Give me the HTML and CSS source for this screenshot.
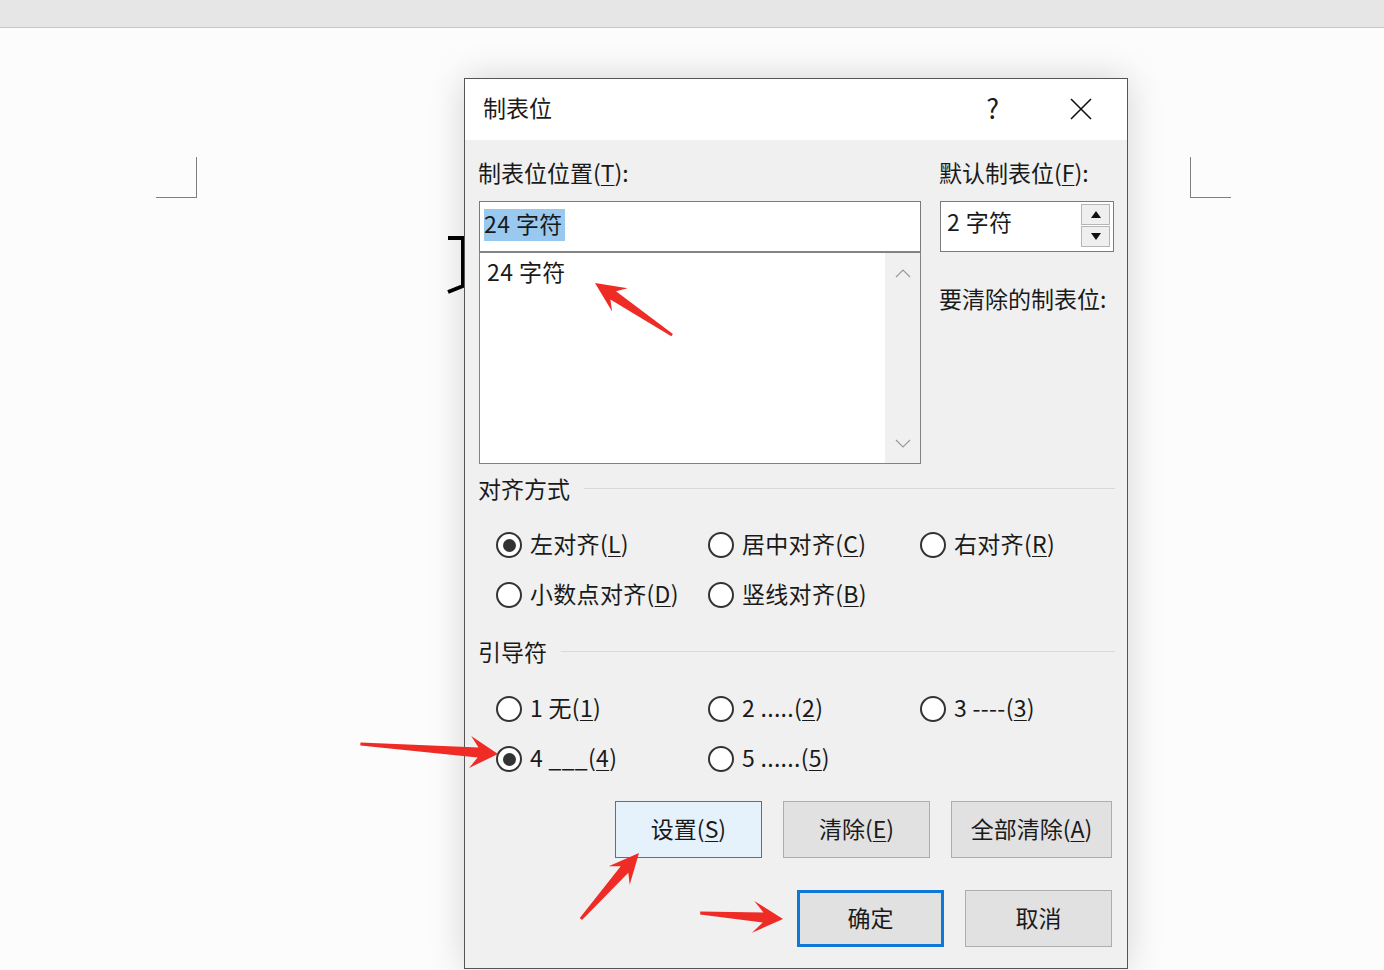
FILE: index.html
```html
<!DOCTYPE html>
<html lang="zh-CN">
<head>
<meta charset="utf-8">
<title>制表位</title>
<link rel="stylesheet" href="styles.css">
</head>
<body>
<div class="app">
  <div class="topbar"></div>
  <div class="page">
    <span class="crop crop-left"></span>
    <span class="crop crop-right"></span>
    <svg class="cursor" width="22" height="62" viewBox="0 0 22 62">
      <path d="M2 3 H17 V51 L2 57" fill="none" stroke="#000" stroke-width="4"/>
    </svg>

    <div class="dialog">
      <div class="titlebar">
        <span class="title">制表位</span>
        <span class="help">?</span>
        <svg class="close" width="22" height="22" viewBox="0 0 22 22">
          <path d="M1 1 L21 21 M21 1 L1 21" stroke="#111" stroke-width="1.6" fill="none"/>
        </svg>
      </div>

      <div class="body">
        <div class="top">
          <div class="col col-left">
            <div class="label">制表位位置(<u>T</u>):</div>
            <div class="input"><span class="sel">24 字符</span></div>
            <div class="list">
              <div class="list-items">
                <div class="list-item">24 字符</div>
              </div>
              <div class="scroll">
                <svg width="16" height="10" viewBox="0 0 16 10"><path d="M1 9 L8 2 L15 9" fill="none" stroke="#9a9a9a" stroke-width="1.2"/></svg>
                <svg width="16" height="10" viewBox="0 0 16 10"><path d="M1 1 L8 8 L15 1" fill="none" stroke="#9a9a9a" stroke-width="1.2"/></svg>
              </div>
            </div>
          </div>
          <div class="col col-right">
            <div class="label">默认制表位(<u>F</u>):</div>
            <div class="spin">
              <span class="spin-text">2 字符</span>
              <div class="spin-btns">
                <span class="spin-btn"><svg width="10" height="7" viewBox="0 0 10 7"><path d="M0 7 L5 0 L10 7 Z" fill="#111"/></svg></span>
                <span class="spin-btn"><svg width="10" height="7" viewBox="0 0 10 7"><path d="M0 0 L5 7 L10 0 Z" fill="#111"/></svg></span>
              </div>
            </div>
            <div class="label clear-label">要清除的制表位:</div>
          </div>
        </div>

        <div class="group-head group-align"><span class="gh-text">对齐方式</span><span class="rule"></span></div>
        <div class="radios">
          <div class="radio checked"><span class="dot"></span><span class="rt">左对齐(<u>L</u>)</span></div>
          <div class="radio"><span class="dot"></span><span class="rt">居中对齐(<u>C</u>)</span></div>
          <div class="radio"><span class="dot"></span><span class="rt">右对齐(<u>R</u>)</span></div>
          <div class="radio"><span class="dot"></span><span class="rt">小数点对齐(<u>D</u>)</span></div>
          <div class="radio"><span class="dot"></span><span class="rt">竖线对齐(<u>B</u>)</span></div>
        </div>

        <div class="group-head group-leader"><span class="gh-text">引导符</span><span class="rule"></span></div>
        <div class="radios radios-leader">
          <div class="radio"><span class="dot"></span><span class="rt">1 无(<u>1</u>)</span></div>
          <div class="radio"><span class="dot"></span><span class="rt">2 .....(<u>2</u>)</span></div>
          <div class="radio"><span class="dot"></span><span class="rt">3 ----(<u>3</u>)</span></div>
          <div class="radio checked"><span class="dot"></span><span class="rt">4 ___(<u>4</u>)</span></div>
          <div class="radio"><span class="dot"></span><span class="rt">5 ......(<u>5</u>)</span></div>
        </div>

        <div class="buttons buttons-top">
          <span class="btn btn-hot">设置(<u>S</u>)</span>
          <span class="btn">清除(<u>E</u>)</span>
          <span class="btn btn-wide">全部清除(<u>A</u>)</span>
        </div>
        <div class="buttons buttons-bottom">
          <span class="btn btn-default">确定</span>
          <span class="btn">取消</span>
        </div>
      </div>
    </div>

    <svg class="annot" width="1384" height="970" viewBox="0 0 1384 970">
      <g fill="#ee2b25">
        <polygon points="595,283 627.7,288.2 616.0,291.2 672.9,333.9 671.3,336.3 610.4,299.4 612.1,311.4"/>
        <polygon points="498,754 471.2,736.0 478.5,747.6 360.5,742.6 360.3,745.5 477.7,757.5 469.0,768.0"/>
        <polygon points="639,853 629.7,884.7 628.3,872.8 582.0,920.1 579.8,918.1 620.7,866.2 608.7,866.3"/>
        <polygon points="783,919 754.3,900.9 763.5,912.6 700.3,911.5 700.1,914.5 762.7,922.6 752.0,932.8"/>
      </g>
    </svg>
  </div>
</div>
</body>
</html>
```

FILE: styles.css
```css
* { box-sizing: border-box; }

html, body {
  margin: 0;
  padding: 0;
}

body {
  font-family: "Noto Sans CJK SC", "Noto Sans", sans-serif;
  color: #1a1a1a;
  background: #fdfcfd;
}

.app {
  width: 1384px;
  height: 970px;
  overflow: hidden;
  position: relative;
}

.topbar {
  height: 28px;
  background: #e6e6e6;
  border-bottom: 1px solid #c8c8c8;
}

.page {
  position: absolute;
  left: 0;
  top: 0;
  width: 1384px;
  height: 970px;
  pointer-events: none;
}

.crop {
  position: absolute;
  top: 157px;
  width: 41px;
  height: 41px;
  border-bottom: 1px solid #7f7f7f;
}

.crop-left {
  left: 156px;
  border-right: 1px solid #7f7f7f;
}

.crop-right {
  left: 1190px;
  border-left: 1px solid #7f7f7f;
}

.cursor {
  position: absolute;
  left: 446px;
  top: 235px;
}

.dialog {
  position: absolute;
  left: 464px;
  top: 78px;
  width: 664px;
  height: 891px;
  border: 1px solid #555;
  background: #f0f0f0;
  box-shadow: 0 0 34px rgba(0, 0, 0, 0.16);
  display: flex;
  flex-direction: column;
}

.titlebar {
  height: 61px;
  background: #fff;
  display: flex;
  align-items: center;
  padding: 0 35px 2px 18px;
}

.title {
  font-size: 23px;
  line-height: 30px;
  padding-bottom: 3px;
}

.help {
  margin-left: auto;
  font-size: 27px;
  line-height: 30px;
  margin-right: 71px;
  padding-bottom: 2px;
}

.close {
  display: block;
}

.body {
  padding: 20px 12px 0 14px;
  font-size: 23px;
}

.top {
  display: grid;
  grid-template-columns: 442px 174px;
  column-gap: 19px;
}

.label {
  line-height: 30px;
  white-space: nowrap;
  margin-left: -1px;
  margin-top: -3px;
  padding-bottom: 3px;
}

u {
  text-underline-offset: 3px;
  text-decoration-thickness: 1px;
}

.input {
  margin-top: 11px;
  height: 51px;
  border: 1px solid #7a7a7a;
  border-bottom-color: #6f8aa6;
  background: #fff;
  padding: 4px 0 0 4px;
}

.sel {
  display: inline-block;
  background: #99c9ef;
  line-height: 29px;
  padding: 0 2px 3px 0;
  letter-spacing: 0.4px;
}

.list {
  height: 212px;
  border: 1px solid #828282;
  background: #fff;
  display: flex;
}

.list-items {
  flex: 1;
  padding: 3px 0 0 7px;
}

.list-item {
  line-height: 30px;
  letter-spacing: 0.4px;
}

.scroll {
  width: 35px;
  background: #f0f0f0;
  display: flex;
  flex-direction: column;
  align-items: center;
  justify-content: space-between;
  padding: 15px 0 14px;
}

.scroll svg { display: block; }

.spin {
  margin-top: 11px;
  height: 51px;
  border: 1px solid #7a7a7a;
  background: #fff;
  display: flex;
  align-items: flex-start;
}

.spin-text {
  flex: 1;
  padding-left: 6px;
  line-height: 38px;
  letter-spacing: 0.4px;
}

.spin-btns {
  margin: 2px 3px 0 0;
  display: flex;
  flex-direction: column;
  gap: 1px;
}

.spin-btn {
  width: 29px;
  height: 21px;
  border: 1px solid #b5b5b5;
  background: #efefef;
  display: flex;
  align-items: center;
  justify-content: center;
}

.spin-btn svg { display: block; }

.clear-label {
  margin-top: 31px;
}

.group-head {
  display: flex;
  align-items: center;
  gap: 14px;
  height: 30px;
  margin-left: -1px;
}

.gh-text {
  line-height: 26px;
  padding-bottom: 4px;
}

.group-align { margin-top: 11px; }
.group-leader { margin-top: 28px; }

.rule {
  flex: 1;
  height: 1px;
  background: #d9d9d9;
  margin-top: -3px;
}

.radios {
  display: grid;
  grid-template-columns: 212px 212px 212px;
  grid-auto-rows: 30px;
  row-gap: 20px;
  padding-left: 17px;
  margin-top: 25px;
}

.radios-leader { margin-top: 26px; }

.radio {
  display: flex;
  align-items: center;
  gap: 8px;
  height: 30px;
  white-space: nowrap;
}

.rt {
  line-height: 27px;
  padding-bottom: 3px;
  letter-spacing: 0.3px;
}

.dot {
  width: 26px;
  height: 26px;
  border: 2px solid #333;
  border-radius: 50%;
  background: #fff;
  display: flex;
  align-items: center;
  justify-content: center;
  flex: none;
}

.radio.checked .dot::after {
  content: "";
  width: 13px;
  height: 13px;
  border-radius: 50%;
  background: #333;
}

.buttons {
  display: flex;
  justify-content: flex-end;
  gap: 21px;
  padding-right: 3px;
}

.buttons-top { margin-top: 27px; }
.buttons-bottom { margin-top: 32px; }

.btn {
  width: 147px;
  height: 57px;
  border: 1px solid #adadad;
  background: #e1e1e1;
  display: flex;
  align-items: center;
  justify-content: center;
  line-height: 30px;
  padding-bottom: 4px;
}

.btn-wide { width: 161px; }

.btn-hot {
  background: #e5f1fb;
  border-color: #2b7bd3;
}

.btn-default {
  border: 3px solid #0f78d6;
}

.annot {
  position: absolute;
  left: 0;
  top: 0;
}
```
